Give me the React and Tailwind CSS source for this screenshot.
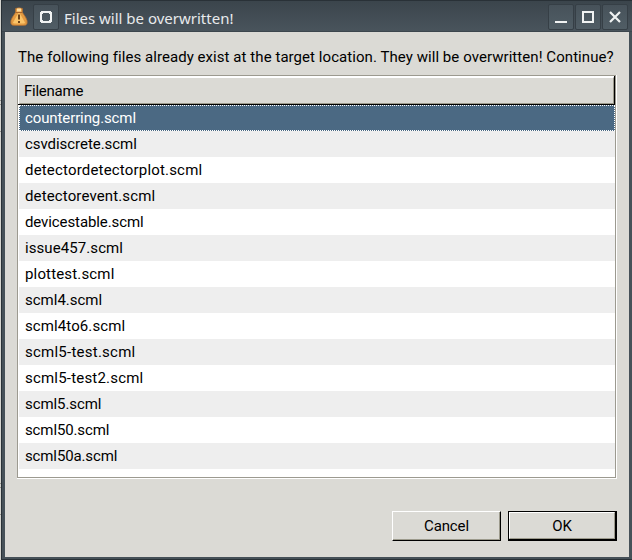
import React from 'react';

const files = [
  { name: 'counterring.scml', spacing: 'tracking-[-0.11px]' },
  { name: 'csvdiscrete.scml', spacing: 'tracking-[-0.05px]' },
  { name: 'detectordetectorplot.scml', spacing: 'tracking-[0.18px]' },
  { name: 'detectorevent.scml', spacing: 'tracking-[0.13px]' },
  { name: 'devicestable.scml', spacing: 'tracking-[-0.1px]' },
  { name: 'issue457.scml', spacing: 'tracking-[0.08px]' },
  { name: 'plottest.scml', spacing: 'tracking-[0.16px]' },
  { name: 'scml4.scml', spacing: 'tracking-[0px]' },
  { name: 'scml4to6.scml', spacing: 'tracking-[0.1px]' },
  { name: 'scml5-test.scml', spacing: 'tracking-[0.24px]' },
  { name: 'scml5-test2.scml', spacing: 'tracking-[0.2px]' },
  { name: 'scml5.scml', spacing: 'tracking-[-0.08px]' },
  { name: 'scml50.scml', spacing: 'tracking-[-0.12px]' },
  { name: 'scml50a.scml', spacing: 'tracking-[-0.13px]' },
];

function TitleButton({ children, label }) {
  return (
    <button aria-label={label} className="h-[26px] w-[26px] shrink-0 rounded-[2px] border border-[#363f46] bg-linear-to-b from-[#47525a] to-[#505d65]">
      <svg width="24" height="24" viewBox="0 0 24 24" fill="none" stroke="#f0f2f2" strokeWidth="2" shapeRendering="crispEdges">
        {children}
      </svg>
    </button>
  );
}

function WarningIcon() {
  return (
    <svg width="18" height="20" viewBox="0 0 18 20" className="shrink-0">
      <path d="M5.5 1.5Q9 0 12.5 1.5V5.5L15.5 10Q18 14 17 17Q16 18.5 13 18.5H5Q2 18.5 1 17Q0 14 2.5 10L5.5 5.5Z" fill="#e39a42" stroke="#a86c34" strokeWidth=".7" />
      <path d="M9 5L15 15.5Q15 16.5 13.5 16.5H4.5Q3 16.5 3 15.5Z" fill="#fbc468" />
      <path d="M7 1.5h4v3H7z" fill="#ffdda0" />
      <path d="M6 5.5h6" stroke="#a9642a" strokeWidth="1" />
      <path d="M9 7.5v5M9 14v2" stroke="#6f4318" strokeWidth="2" />
    </svg>
  );
}

export default function App() {
  return (
    <div className="flex h-[560px] w-[632px] overflow-hidden bg-[#d4d4cf] font-['Roboto','Liberation_Sans',sans-serif] text-[15px] text-black">
      <div className="w-px shrink-0">
        <div className="mt-[100px] h-[5px] border-y border-[#96968f]" />
        <div className="mt-[26px] h-px bg-[#96968f]" />
        <div className="mt-[351px] h-[5px] border-y border-[#96968f]" />
        <div className="mt-[26px] h-px bg-[#96968f]" />
      </div>
      <div className="flex min-w-0 flex-1 flex-col border-y border-l border-[#293137] bg-[#465158] pr-[3px] pb-[2px] pl-[3px]">
        <header className="-mr-[3px] -ml-[3px] flex h-[31px] shrink-0 items-start border-b border-[#3c464d] bg-linear-to-b from-[#3b454c] to-[#49545c] pt-[3px] pl-2">
          <div className="pt-[3px]"><WarningIcon /></div>
          <div className="ml-[5px]">
            <TitleButton label="Window menu">
              <path d="M8 7h8v1h1v8h-1v1H8v-1H7V8h1z" />
            </TitleButton>
          </div>
          <h1 className="ml-[5px] grow pt-[3px] font-['Noto_Sans',sans-serif] text-[15px] leading-[22px] text-[#e8eaec]">Files will be overwritten!</h1>
          <div className="flex gap-px pr-[4px]">
            <TitleButton label="Minimize"><path d="M6 17h12" /></TitleButton>
            <TitleButton label="Maximize"><path d="M7 7h10v10H7z" /></TitleButton>
            <TitleButton label="Close"><path d="m7 7 10 10M17 7 7 17" shapeRendering="auto" strokeWidth="2.2" /></TitleButton>
          </div>
        </header>
        <main className="flex min-h-0 flex-1 flex-col bg-[#dbdad5] pr-3 pl-3">
          <p className="h-[43px] pt-[15px] pl-px leading-5 tracking-[0.06px] whitespace-nowrap">The following files already exist at the target location. They will be overwritten! Continue?</p>
          <div className="h-[404px] w-[600px] shrink-0 border-r border-b border-white">
            <div className="h-[403px] w-[599px] border border-[#9c9a90] bg-white">
              <div className="h-[29px] border-r border-b border-black pt-px pl-px">
                <div className="flex h-[27px] items-center border-t border-r border-b border-l border-t-white border-r-[#9c9a8c] border-b-[#9c9a8c] border-l-[#dbdad5] bg-[#dbdad5] pt-[2px] pl-1 tracking-[-0.25px]">Filename</div>
              </div>
              <ul className="pl-px">
                {files.map(({ name, spacing }, i) => (
                  <li key={name} className={`flex h-[26px] items-center border border-dotted pl-[5px] ${spacing} ${i === 0 ? 'border-white bg-[#4b6983] text-white' : i % 2 ? 'border-transparent bg-[#eeeeee]' : 'border-transparent bg-white'}`}>{name}</li>
                ))}
              </ul>
            </div>
          </div>
          <footer className="mt-8 flex gap-[7px] pl-[375px]">
            <button className="h-[30px] w-[109px] border border-t-white border-r-black border-b-black border-l-white">
              <span className="flex h-[28px] items-center justify-center border-r border-b border-[#9c9a8c] pt-[2px] pl-px tracking-[-0.12px]">Cancel</span>
            </button>
            <button className="h-[30px] w-[109px] border-t border-r-2 border-b-2 border-l border-black">
              <span className="flex h-[27px] items-center justify-center border border-t-white border-r-[#9c9a8c] border-b-[#9c9a8c] border-l-white pt-[2px] tracking-[-0.2px]">OK</span>
            </button>
          </footer>
        </main>
      </div>
    </div>
  );
}
